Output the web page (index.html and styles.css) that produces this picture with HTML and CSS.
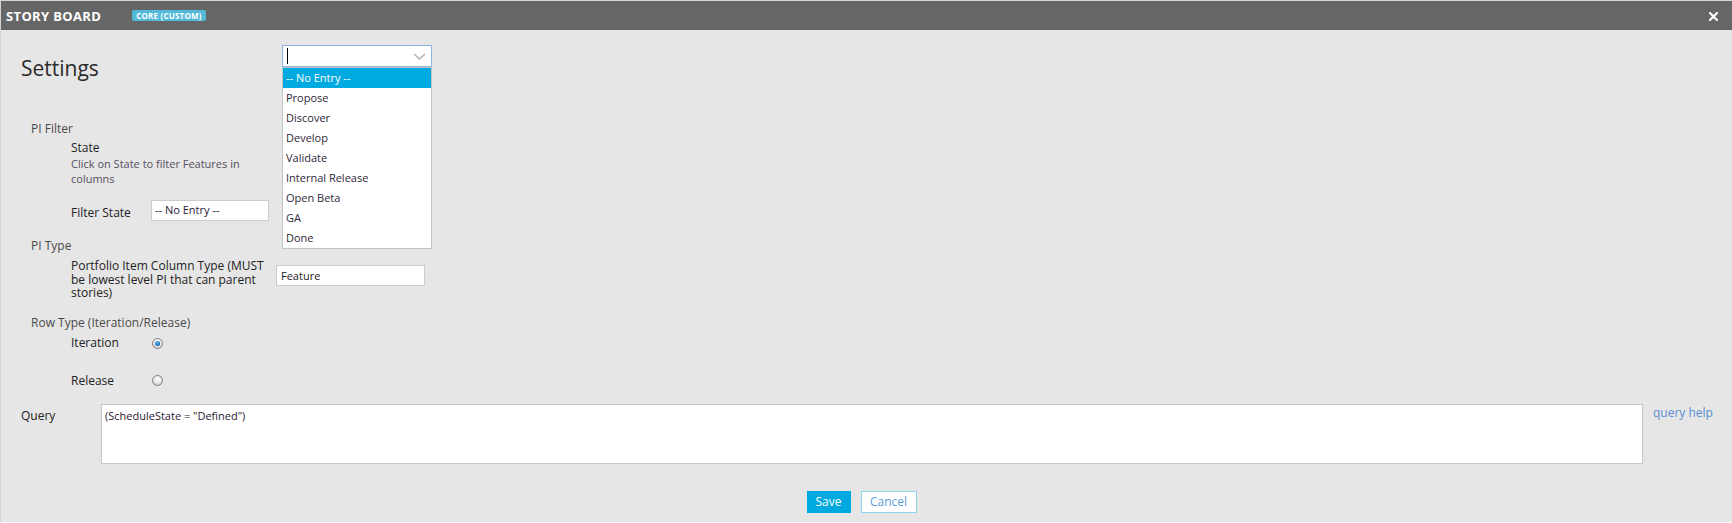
FILE: index.html
```html
<!DOCTYPE html>
<html>
<head>
<meta charset="utf-8">
<link rel="stylesheet" href="styles.css">
</head>
<body>
<div class="window">
  <div class="header">
    <span class="title">STORY BOARD</span>
    <span class="badge">CORE (CUSTOM)</span>
    <span class="close"><svg width="9" height="9" viewBox="0 0 9 9"><path d="M1 1 L8 8 M8 1 L1 8" stroke="#fff" stroke-width="2.2" stroke-linecap="square"/></svg></span>
  </div>
  <div class="content">
    <h1 class="settings-title">Settings</h1>

    <div class="section-head pi-filter">PI Filter</div>
    <div class="sub">
      <div class="field-name">State</div>
      <div class="field-desc">Click on State to filter Features in columns</div>
    </div>
    <div class="sub row filter-row">
      <div class="row-label">Filter State</div>
      <div class="input filter-input">-- No Entry --</div>
    </div>

    <div class="section-head pi-type">PI Type</div>
    <div class="sub row portfolio-row">
      <div class="portfolio-label">Portfolio Item Column Type (MUST be lowest level PI that can parent stories)</div>
      <div class="input feature-input">Feature</div>
    </div>

    <div class="section-head row-type">Row Type (Iteration/Release)</div>
    <div class="sub row radio-row iteration-row">
      <div class="row-label">Iteration</div>
      <span class="radio checked"></span>
    </div>
    <div class="sub row radio-row release-row">
      <div class="row-label">Release</div>
      <span class="radio"></span>
    </div>

    <div class="row query-row">
      <div class="query-label">Query</div>
      <div class="textarea">(ScheduleState = "Defined")</div>
      <a class="query-help">query help</a>
    </div>

    <div class="buttons">
      <span class="btn save">Save</span>
      <span class="btn cancel">Cancel</span>
    </div>
  </div>

  <div class="combo">
    <span class="caret"></span>
    <svg class="chevron" width="13" height="7" viewBox="0 0 13 7"><path d="M1 1 L6.5 6 L12 1" fill="none" stroke="#b4b4b4" stroke-width="1.6"/></svg>
  </div>
  <ul class="picker">
    <li class="selected">-- No Entry --</li>
    <li>Propose</li>
    <li>Discover</li>
    <li>Develop</li>
    <li>Validate</li>
    <li>Internal Release</li>
    <li>Open Beta</li>
    <li>GA</li>
    <li>Done</li>
  </ul>
</div>
</body>
</html>
```
FILE: styles.css
```css
html, body {
  margin: 0;
  padding: 0;
  background: #ffffff;
}
.window {
  position: relative;
  width: 1732px;
  height: 522px;
  box-sizing: border-box;
  border-top: 1px solid #d4d4d4;
  border-left: 1px solid #d4d4d4;
  background: #e6e6e6;
  font-family: "Open Sans", "Noto Sans", sans-serif;
  overflow: hidden;
}
.header {
  height: 29px;
  background: #666666;
  display: flex;
  align-items: center;
  padding-left: 5px;
}
.title {
  color: #ffffff;
  font-weight: 700;
  font-size: 13px;
  letter-spacing: 0.35px;
  line-height: 16px;
}
.badge {
  margin-left: 31px;
  margin-top: -1px;
  background: #52bad8;
  color: #ffffff;
  font-weight: 700;
  font-size: 8px;
  line-height: 11px;
  height: 11px;
  padding: 0 4px;
  border-radius: 2px;
  letter-spacing: 0.2px;
}
.close {
  margin-left: auto;
  margin-right: 14px;
  display: flex;
  margin-top: 2px;
}
.content {
  padding-left: 20px;
}
.settings-title {
  margin: 24px 0 0 0;
  font-weight: 400;
  font-size: 21px;
  line-height: 28px;
  height: 28px;
  color: #2a2a2a;
}
.section-head {
  margin-left: 10px;
  font-size: 12px;
  line-height: 16px;
  color: #4a4a4a;
}
.pi-filter { margin-top: 39px; }
.pi-type { margin-top: 17px; }
.row-type { margin-top: 15px; }
.sub {
  margin-left: 50px;
}
.field-name {
  margin-top: 3px;
  font-size: 12px;
  line-height: 16px;
  color: #222222;
}
.field-desc {
  width: 178px;
  font-size: 11px;
  line-height: 15px;
  color: #545060;
}
.row {
  display: flex;
  align-items: flex-start;
}
.row-label {
  width: 80px;
  flex: none;
  font-size: 12px;
  color: #222222;
}
.filter-row {
  margin-top: 14px;
}
.filter-row .row-label {
  line-height: 16px;
  padding-top: 5px;
}
.input {
  box-sizing: border-box;
  background: #ffffff;
  border: 1px solid #cccccc;
  font-size: 11px;
  color: #2c2036;
}
.filter-input {
  width: 118px;
  height: 21px;
  line-height: 17px;
  padding-left: 3px;
}
.portfolio-row {
  margin-top: 5px;
}
.portfolio-label {
  width: 200px;
  flex: none;
  font-size: 12px;
  line-height: 13.5px;
  color: #222222;
}
.feature-input {
  margin-left: 5px;
  margin-top: 6px;
  width: 149px;
  height: 21px;
  line-height: 19px;
  padding-left: 4px;
  color: #222222;
}
.radio-row {
  align-items: center;
  height: 20px;
}
.radio-row .row-label {
  line-height: 20px;
}
.iteration-row { margin-top: 2.5px; }
.release-row { margin-top: 17.5px; }
.radio {
  box-sizing: border-box;
  width: 11px;
  height: 11px;
  margin-left: 1px;
  border-radius: 50%;
  border: 1px solid #7e7e7e;
  background: radial-gradient(circle at 50% 35%, #ffffff 0%, #e4e4e4 55%, #c4c4c4 100%);
  display: flex;
  align-items: center;
  justify-content: center;
}
.radio.checked::after {
  content: "";
  width: 5px;
  height: 5px;
  border-radius: 50%;
  background: radial-gradient(circle at 40% 35%, #6cc0f4 0%, #1466b0 65%, #0b3f78 100%);
}
.query-row {
  margin-top: 13px;
}
.query-label {
  width: 80px;
  flex: none;
  font-size: 12px;
  line-height: 16px;
  padding-top: 4px;
  color: #222222;
}
.textarea {
  box-sizing: border-box;
  width: 1542px;
  height: 60px;
  background: #ffffff;
  border: 1px solid #c8c8c8;
  padding: 4px 3px;
  font-size: 11px;
  line-height: 14px;
  color: #2c2036;
}
.query-help {
  margin-left: 10px;
  font-size: 12px;
  line-height: 16px;
  padding-top: 1px;
  color: #5b8ed2;
  cursor: pointer;
}
.buttons {
  display: flex;
  justify-content: center;
  gap: 10px;
  margin-top: 27px;
  padding-right: 30px;
}
.btn {
  box-sizing: border-box;
  height: 22px;
  line-height: 20px;
  font-size: 12px;
  text-align: center;
}
.save {
  width: 44px;
  background: #00a9e0;
  border: 1px solid #00a9e0;
  color: #ffffff;
}
.cancel {
  width: 56px;
  background: #ffffff;
  border: 1px solid #8dd2ee;
  color: #5b9bd8;
}
.combo {
  position: absolute;
  left: 281px;
  top: 44px;
  box-sizing: border-box;
  width: 150px;
  height: 22px;
  background: #ffffff;
  border: 1px solid #8cb4df;
}
.caret {
  position: absolute;
  left: 4px;
  top: 2px;
  width: 1px;
  height: 16px;
  background: #000000;
}
.chevron {
  position: absolute;
  right: 5px;
  top: 7px;
}
.picker {
  position: absolute;
  left: 281px;
  top: 66px;
  margin: 0;
  padding: 0;
  list-style: none;
  box-sizing: border-box;
  width: 150px;
  background: #ffffff;
  border: 1px solid #c4c4c4;
}
.picker li {
  height: 20px;
  line-height: 20px;
  padding-left: 3px;
  font-size: 11px;
  color: #2f2838;
}
.picker li.selected {
  background: #00a9e0;
  color: #ffffff;
}
```
